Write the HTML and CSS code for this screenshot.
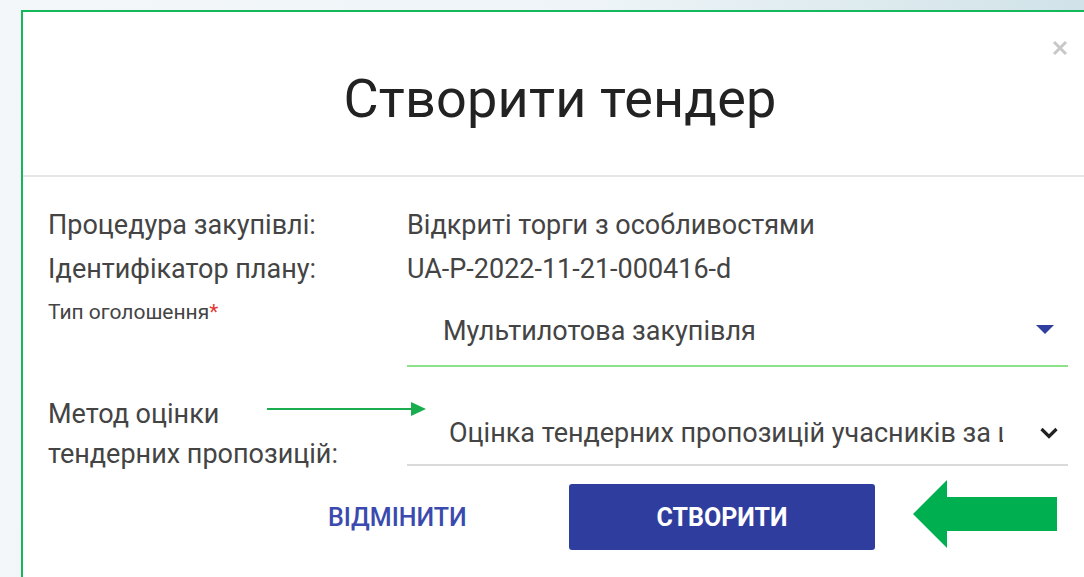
FILE: index.html
```html
<!DOCTYPE html>
<html lang="uk">
<head>
<meta charset="utf-8">
<title>Створити тендер</title>
<link rel="stylesheet" href="styles.css">
</head>
<body>
<div class="page">
  <div class="modal">
    <button class="close" aria-label="Закрити">
      <svg viewBox="0 0 16 16" width="16" height="16"><path d="M2 2 L14 14 M14 2 L2 14" stroke="#c8c8c8" stroke-width="3" stroke-linecap="butt"/></svg>
    </button>
    <header class="modal-head">
      <h1 class="modal-title">Створити тендер</h1>
    </header>
    <section class="modal-body">
      <div class="info-row">
        <span class="label">Процедура закупівлі:</span>
        <span class="value">Відкриті торги з особливостями</span>
      </div>
      <div class="info-row">
        <span class="label">Ідентифікатор плану:</span>
        <span class="value">UA-P-2022-11-21-000416-d</span>
      </div>
      <div class="field-row">
        <span class="small-label">Тип оголошення<span class="req">*</span></span>
        <div class="select select-active">
          <span class="select-text">Мультилотова закупівля</span>
          <svg class="caret" viewBox="0 0 18 9" width="18" height="9"><path d="M0 0 H18 L9 9 Z" fill="#303f9f"/></svg>
        </div>
      </div>
      <div class="field-row method-row">
        <span class="label method-label">Метод оцінки<br>тендерних пропозицій:</span>
        <div class="select select-plain">
          <span class="select-text">Оцінка тендерних пропозицій учасників за ціною</span>
          <svg class="chevron" viewBox="0 0 18 12" width="18" height="12"><path d="M1.5 2 L9 9.5 L16.5 2" fill="none" stroke="#222" stroke-width="3.2"/></svg>
        </div>
        <svg class="pointer" viewBox="0 0 160 16" width="160" height="16"><path d="M0 8 H146" stroke="#1aad4f" stroke-width="2"/><path d="M144 1 L159 8 L144 15 Z" fill="#1aad4f"/></svg>
      </div>
      <div class="actions">
        <button class="btn-text">ВІДМІНИТИ</button>
        <button class="btn-primary">СТВОРИТИ</button>
        <svg class="big-arrow" viewBox="0 0 145 68" width="145" height="68"><path d="M0 34 L34 0 V17 H144 V51 H34 V68 Z" fill="#00b050"/></svg>
      </div>
    </section>
  </div>
</div>
</body>
</html>
```

FILE: styles.css
```css
html, body {
  margin: 0;
  padding: 0;
}

body {
  font-family: Roboto, "Noto Sans", Arial, sans-serif;
  color: #212121;
}

.page {
  width: 1084px;
  height: 577px;
  overflow: hidden;
  padding: 10px 0 0 21px;
  box-sizing: border-box;
  background: linear-gradient(100deg, #f3f7fa 0%, #eef4f7 50%, #cadfe5 100%);
}

.modal {
  position: relative;
  width: 1078px;
  height: 700px;
  background: #fff;
  border: 2px solid #13b85a;
  box-sizing: border-box;
}

.close {
  position: absolute;
  top: 28px;
  right: 29px;
  padding: 0;
  border: 0;
  background: none;
  width: 16px;
  height: 16px;
  display: flex;
}

.modal-head {
  height: 165px;
  padding-top: 10px;
  border-bottom: 2px solid #e6e6e6;
  display: flex;
  align-items: center;
  justify-content: center;
  box-sizing: border-box;
}

.modal-title {
  margin: 0;
  font-size: 54px;
  font-weight: 400;
  color: #222;
  letter-spacing: 0.2px;
}

.modal-body {
  padding: 26px 29px 0 25px;
}

.info-row {
  display: grid;
  grid-template-columns: 359px 1fr;
  font-size: 27px;
  line-height: 44px;
  color: #444;
}

.label,
.value {
  color: #444;
}

.field-row {
  position: relative;
  display: grid;
  grid-template-columns: 359px 1fr;
  align-items: start;
}

.small-label {
  font-size: 21px;
  color: #444;
  margin-top: 9px;
}

.req {
  color: #e53935;
}

.select {
  display: flex;
  align-items: center;
  justify-content: space-between;
  box-sizing: border-box;
}

.select-active {
  margin-top: 6px;
  height: 70px;
  padding: 0 14px 0 36px;
  border-bottom: 2px solid #8be28b;
}

.select-plain {
  margin-top: 31px;
  height: 68px;
  padding: 4px 10px 0 42px;
  border-bottom: 2px solid #dadada;
}

.select-text {
  font-size: 27px;
  color: #444;
  white-space: nowrap;
  overflow: hidden;
}

.select-plain .select-text {
  max-width: 554px;
}

.select-active .caret {
  margin-top: -4px;
}

.method-label {
  margin-top: 27px;
  font-size: 27px;
  line-height: 40px;
}

.pointer {
  position: absolute;
  left: 219px;
  top: 34px;
}

.actions {
  display: flex;
  align-items: center;
  padding-left: 280px;
  margin-top: 10px;
}

.btn-text {
  border: 0;
  background: none;
  padding: 0;
  font-family: inherit;
  font-size: 25px;
  font-weight: 500;
  color: #3a4aae;
  width: 140px;
  text-align: left;
}

.btn-primary {
  margin-left: 101px;
  width: 306px;
  height: 66px;
  border: 0;
  border-radius: 3px;
  background: #2f3e9e;
  color: #fff;
  font-family: inherit;
  font-size: 25px;
  font-weight: 700;
}

.big-arrow {
  margin-left: 38px;
  margin-top: -6px;
}
```
